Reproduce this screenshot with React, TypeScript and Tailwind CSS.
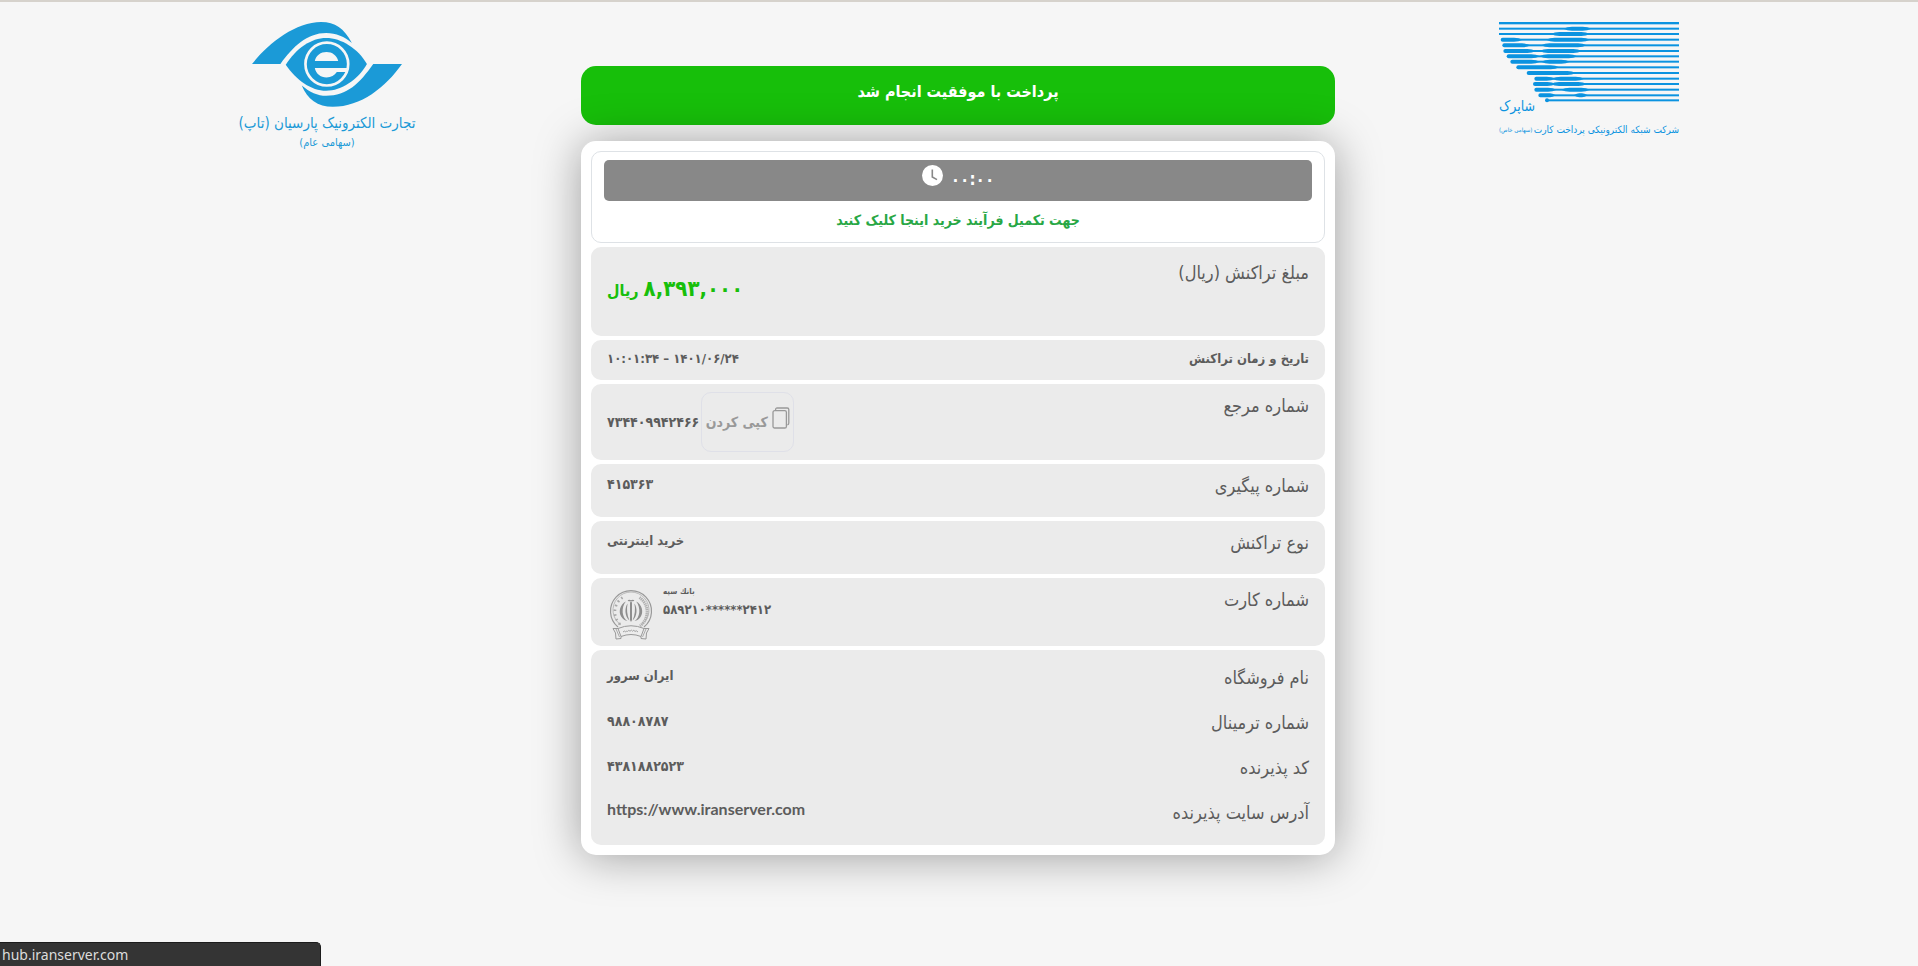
import type { ReactNode } from "react";

const BLUE = "#0b93e0";

/* Each stripe of the Shaparak emblem: where the line starts, and its thick parts. */
const STRIPES: { y: number; from: number; blobs: [number, number, boolean][] }[] = [
  { y: 86, from: 57, blobs: [[250, 334, false]] },
  { y: 102, from: 57, blobs: [[212, 330, false]] },
  { y: 119, from: 70, blobs: [[62, 128, true], [198, 330, false]] },
  { y: 136, from: 75, blobs: [[67, 152, true], [183, 320, false]] },
  { y: 153, from: 78, blobs: [[70, 168, true], [178, 306, false]] },
  { y: 169, from: 88, blobs: [[80, 180, true], [178, 292, false]] },
  { y: 185, from: 99, blobs: [[91, 180, true], [183, 270, false]] },
  { y: 202, from: 117, blobs: [[109, 238, true]] },
  { y: 219, from: 148, blobs: [[140, 288, true]] },
  { y: 236, from: 171, blobs: [[163, 226, true], [216, 313, false]] },
  { y: 252, from: 167, blobs: [[159, 228, true], [211, 321, false]] },
  { y: 269, from: 171, blobs: [[163, 230, true], [243, 330, false]] },
  { y: 286, from: 183, blobs: [[175, 228, true], [280, 324, false]] },
  { y: 301, from: 203, blobs: [[195, 213, true]] },
];

function blobPath(x0: number, x1: number, y: number, round: boolean) {
  const r = 6;
  const long = x1 - x0 > 60;
  const tip = long ? 26 : 18;
  const left = round
    ? `M${x0 + r},${y - r} `
    : `M${x0},${y} Q${x0 + 12},${y - r} ${x0 + tip},${y - r} `;
  const right =
    x1 - x0 > 30
      ? `H${x1 - tip} Q${x1 - 12},${y - r} ${x1},${y} Q${x1 - 12},${y + r} ${x1 - tip},${y + r} `
      : `A${r},${r} 0 0 1 ${x0 + r},${y + r} `;
  const close = round
    ? `H${x0 + r} A${r},${r} 0 0 1 ${x0 + r},${y - r} Z`
    : `H${x0 + tip} Q${x0 + 12},${y + r} ${x0},${y} Z`;
  return left + right + close;
}

function ShaparakLogo() {
  return (
    <div className="w-[180px] shrink-0 text-[#0b93e0]">
      <svg viewBox="57 66 540 288" className="block w-full" role="img" aria-label="شاپرک">
        <rect x="57" y="66" width="540" height="7" fill={BLUE} />
        {STRIPES.map((s) => (
          <g key={s.y} fill={BLUE}>
            <rect x={s.from} y={s.y - 3} width={597 - s.from} height="6" />
            {s.blobs.map(([a, b, round]) => (
              <path key={a} d={blobPath(a, b, s.y, round)} />
            ))}
          </g>
        ))}
        <text
          x="57"
          y="334"
          direction="ltr"
          fill={BLUE}
          fontSize="42"
          className="font-['DejaVu_Sans_Condensed','DejaVu_Sans',sans-serif]"
        >
          شاپرک
        </text>
      </svg>
      <p className="flex items-center justify-between whitespace-nowrap text-[10px] leading-6">
        <span>شرکت شبکه الکترونیکی پرداخت کارت</span>
        <span className="text-[6px]">(سهامی خاص)</span>
      </p>
    </div>
  );
}

function TapLogo() {
  return (
    <div className="w-[180px] shrink-0 text-center text-[#1b9ad7]">
      <svg viewBox="103 66 449 254" className="mx-auto block w-[150px]" role="img" aria-label="تاپ">
        <g fill="#1b9ad7">
          <path d="M103,192 C150,132 232,66 310,66 C352,66 378,84 402,129 C380,110 355,99 325,99 C268,99 225,140 188,192 Z" />
          <path d="M552,192 C502,262 430,320 345,320 C300,320 268,296 252,256 C275,276 300,287 325,287 C388,287 425,250 466,192 Z" />
          <path d="M204,194 C235,145 280,114 325,114 C370,114 420,145 447,192 C420,240 370,272 325,272 C280,272 235,240 204,194 Z" />
        </g>
        <circle cx="327" cy="192" r="64" fill="none" stroke="#f6f6f6" strokeWidth="8" />
        <g fill="#f6f6f6">
          <path d="M291,183 C294,166 309,156 326,156 C343,156 357,166 361,183 Z" />
          <path d="M291,204 H389 V216 H357 C350,226 340,232 326,232 C308,232 294,221 291,204 Z" />
        </g>
      </svg>
      <p className="mt-1 whitespace-nowrap text-[15px] leading-6">تجارت الکترونیک پارسیان (تاپ)</p>
      <p className="text-[11px] leading-4">(سهامی عام)</p>
    </div>
  );
}

function ClockIcon() {
  return (
    <svg viewBox="0 0 21 21" className="mb-2 size-[21px]" aria-hidden="true">
      <circle cx="10.5" cy="10.5" r="10.5" fill="#fff" />
      <path d="M10.3 4.5 V12 L15 14.6" fill="none" stroke="#888" strokeWidth="1.6" />
    </svg>
  );
}

function CopyIcon() {
  return (
    <svg viewBox="0 0 18 22" className="mb-2 h-[22px] w-[18px]" fill="none" stroke="#999" aria-hidden="true">
      <rect x="1" y="3.7" width="13.4" height="17.3" rx="1.6" strokeWidth="1.3" />
      <path d="M3.6 3.5 V2.6 Q3.6 1 5.2 1 H15.2 Q16.8 1 16.8 2.6 V16 Q16.8 17.6 15.4 17.8" strokeWidth="1.3" />
    </svg>
  );
}

function BankIcon() {
  return (
    <svg viewBox="0 0 44 50" className="h-[50px] w-[44px]" fill="none" stroke="#999" aria-hidden="true">
      <path d="M9 37 A20.5 20.5 0 1 1 35 37" strokeWidth="1.2" />
      <path d="M12 35 A18 18 0 1 1 32 35" strokeWidth="0.6" />
      <path d="M30.5 7.5 A17.5 17.5 0 0 1 31 36" strokeWidth="3" stroke="#b0b0b0" strokeDasharray="1.4 0.6" />
      <path d="M13.5 7.5 A17.5 17.5 0 0 0 13 36" strokeWidth="2.6" stroke="#a8a8a8" strokeDasharray="1.6 3.2" />
      <g fill="#8e8e8e" stroke="none">
        <path d="M21 12.5 L22 11 L23 12.5 V30 L22 32 L21 30 Z" />
        <path d="M16.8 11.4 C11 14.5 9 22 12.5 27 C14 29.3 16 30.6 18.4 31 C13 27.5 11.8 18 16.8 11.4 Z" />
        <path d="M27.2 11.4 C33 14.5 35 22 31.5 27 C30 29.3 28 30.6 25.6 31 C31 27.5 32.2 18 27.2 11.4 Z" />
        <path d="M18.6 13.6 C15.4 18 15.6 26.5 20.4 30.6 C18 25 17.4 19 18.6 13.6 Z" />
        <path d="M25.4 13.6 C28.6 18 28.4 26.5 23.6 30.6 C26 25 26.6 19 25.4 13.6 Z" />
        <path d="M18.6 10.4 Q20.4 12 22 10.9 Q23.6 12 25.4 10.4 Q24 9.4 22 10.3 Q20 9.4 18.6 10.4 Z" />
      </g>
      <path d="M9 38.5 Q22 33 35 38.5 L32 46.5 Q22 42.5 12 46.5 Z" fill="#ececec" strokeWidth="1" />
      <path d="M9 38.5 L4 38.5 L6.5 43 L7 49 L12 48.5 L12 46.5 M35 38.5 L40 38.5 L37.5 43 L37 49 L32 48.5 L32 46.5" strokeWidth="1" />
      <path d="M7 39 L10.5 47 M37 39 L33.5 47" strokeWidth="0.8" />
      <path d="M14 42 q1.4 -2 2.6 0 q1 -1.8 2 -0.6 q1.2 -2 2.4 -0.2 q1.6 -2 2.6 0 q1.2 -2 2.4 0.2 q1.4 -1.4 3 0.6" strokeWidth="0.9" />
    </svg>
  );
}

const label = "text-[18px] leading-7";
const value = "text-[13px] leading-6 font-bold";
const digits = "text-[14px] leading-6 font-bold";

function Panel({ className, children }: { className: string; children: ReactNode }) {
  return (
    <div className={`flex justify-between rounded-[10px] bg-[#ebebeb] px-4 ${className}`}>{children}</div>
  );
}

const STORE = [
  { name: "نام فروشگاه", text: "ایران سرور", style: value },
  { name: "شماره ترمینال", text: "۹۸۸۰۸۷۸۷", style: digits },
  { name: "کد پذیرنده", text: "۴۳۸۱۸۸۲۵۲۳", style: digits },
];

export default function App() {
  return (
    <div
      dir="rtl"
      className="min-h-screen border-t-2 border-[#d6d2cc] bg-[#f6f6f6] pr-[2px] font-['DejaVu_Sans_Condensed','DejaVu_Sans',sans-serif] text-[#5c5c5c]"
    >
      <div className="mx-auto flex max-w-[1442px] items-start justify-between pt-5">
        <ShaparakLogo />

        <main className="mt-11 w-[754px]">
          <h1 className="h-[59px] rounded-[15px] bg-[#17bf0a] pt-3 text-center text-[16px] leading-[28px] font-bold text-white">
            پرداخت با موفقیت انجام شد
          </h1>

          <section className="mt-4 flex flex-col gap-1 rounded-[15px] bg-white p-[10px] shadow-[0_2px_46px_rgba(0,0,0,0.36)]">
            <div className="h-[92px] rounded-[10px] border border-[#dee2e6] px-3 pt-2 text-center">
              <div className="flex h-[41px] items-center justify-center gap-2 rounded-[5px] bg-[#888] pb-[2px] text-[17px] font-bold text-white">
                <span>۰۰:۰۰</span>
                <ClockIcon />
              </div>
              <a
                href="https://hub.iranserver.com"
                className="mt-1 inline-block text-[14px] leading-[30px] font-bold text-[#28a745]"
              >
                جهت تکمیل فرآیند خرید اینجا کلیک کنید
              </a>
            </div>

            <Panel className="min-h-[89px] pt-3">
              <span className={label}>مبلغ تراکنش (ریال)</span>
              <span className="pt-3 text-[16px] leading-9 font-bold text-[#17bf0a]">
                <span className="text-[22px]">۸,۳۹۳,۰۰۰</span> ریال
              </span>
            </Panel>

            <Panel className="min-h-[40px] items-center pb-[2px]">
              <span className={value}>تاریخ و زمان تراکنش</span>
              <span className={value}>۱۴۰۱/۰۶/۲۴ – ۱۰:۰۱:۳۴</span>
            </Panel>

            <Panel className="min-h-[76px] pt-2">
              <span className={label}>شماره مرجع</span>
              <span className="flex h-[60px] items-center gap-[2px]">
                <button
                  type="button"
                  className="flex h-[60px] w-[93px] items-center justify-center gap-1 rounded-[10px] border border-[#dfe0e8] text-[14px] font-bold text-[#999]"
                >
                  <CopyIcon />
                  کپی کردن
                </button>
                <span className={digits}>۷۳۴۴۰۹۹۴۲۴۶۶</span>
              </span>
            </Panel>

            <Panel className="min-h-[53px] pt-2">
              <span className={label}>شماره پیگیری</span>
              <span className={digits}>۴۱۵۳۶۳</span>
            </Panel>

            <Panel className="min-h-[53px] pt-2">
              <span className={label}>نوع تراکنش</span>
              <span className={value}>خرید اینترنتی</span>
            </Panel>

            <Panel className="min-h-[68px] pt-2">
              <span className={label}>شماره کارت</span>
              <span className="flex gap-[10px] pl-[2px]">
                <span className="flex flex-col items-end font-bold">
                  <span className="text-[8px] leading-3">بانك سپه</span>
                  <span dir="ltr" className={value}>
                    ۵۸۹۲۱۰******۲۴۱۲
                  </span>
                </span>
                <span className="pt-1">
                  <BankIcon />
                </span>
              </span>
            </Panel>

            <div className="flex min-h-[195px] flex-col rounded-[10px] bg-[#ebebeb] px-4 pt-[14px]">
              {STORE.map((row) => (
                <div key={row.name} className="flex h-[45px] justify-between">
                  <span className={label}>{row.name}</span>
                  <span className={row.style}>{row.text}</span>
                </div>
              ))}
              <div className="flex h-[45px] justify-between">
                <span className={label}>آدرس سایت پذیرنده</span>
                <span dir="ltr" className="font-['Lato',sans-serif] text-[16px] leading-5 font-bold">
                  https://www.iranserver.com
                </span>
              </div>
            </div>
          </section>
        </main>

        <TapLogo />
      </div>

      <div
        dir="ltr"
        className="fixed bottom-0 left-0 h-6 w-[321px] rounded-tr-[5px] border-t border-r border-[#1c1c1c] bg-[#343434] pl-[2px] font-['Noto_Sans',sans-serif] text-[14px] leading-6 text-[#dcdcdc]"
      >
        hub.iranserver.com
      </div>
    </div>
  );
}
